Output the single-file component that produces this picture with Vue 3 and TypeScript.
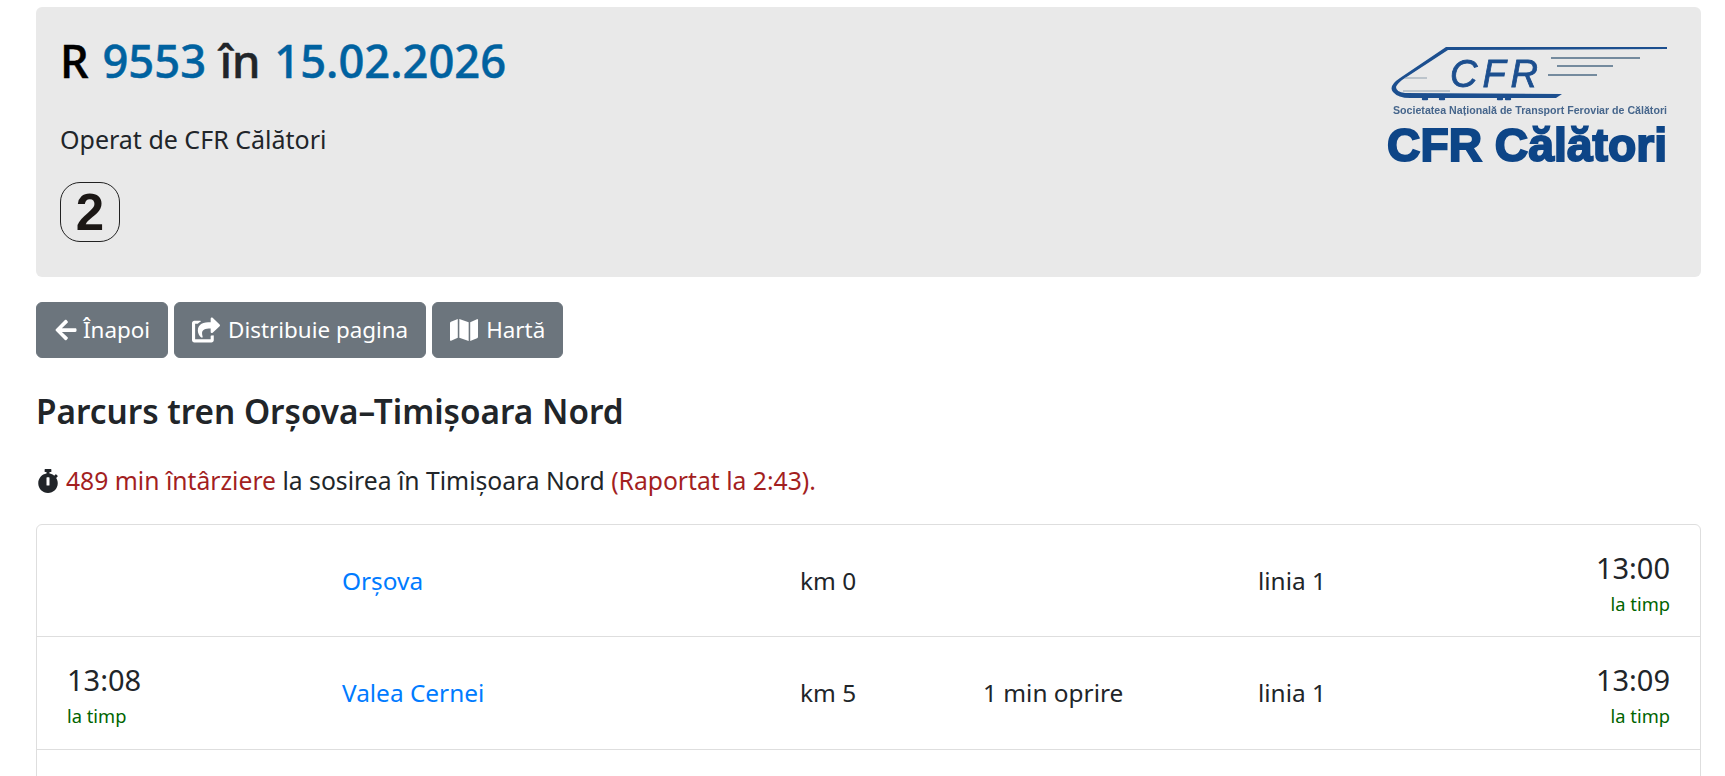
<template>
  <div class="page">
    <div class="jumbotron">
      <div class="train-info">
        <h1 class="title"><span class="dark">R</span> <span class="accent">9553</span> în <span class="accent">15.02.2026</span></h1>
        <p class="operator">Operat de CFR Călători</p>
        <span class="class-badge">2</span>
      </div>
      <svg class="logo" viewBox="22 12 290 126" width="290" height="126" aria-label="CFR Călători">
        <defs>
          <filter id="soft" x="-5%" y="-5%" width="110%" height="110%"><feGaussianBlur stdDeviation="0.45" /></filter>
        </defs>
        <g filter="url(#soft)">
          <path d="M307 17 L86 17 L40 48 Q28 56 33 62 Q38 68 50 68 L196 68 L202 64 L45 63 Q36 62 36 57 Q37 54 42 50 L88 20 L307 19 Z" fill="#1c4f8f" />
          <path d="M191 28 H280 M197 36 H253 M188 45 H237" fill="none" stroke="#4f6d85" stroke-width="1.6" />
          <path d="M45 48 H67 M43 61 H90" fill="none" stroke="#8fa0ad" stroke-width="1.2" />
          <path d="M63 69 h4 M80 69 h4 M138 69 h4 M146 69 h4" fill="none" stroke="#1c4f8f" stroke-width="2.4" stroke-linecap="round" />
          <text x="90" y="57" class="logo-cfr" textLength="88" lengthAdjust="spacing">CFR</text>
          <text x="33" y="84" class="logo-small" textLength="274" lengthAdjust="spacingAndGlyphs">Societatea Națională de Transport Feroviar de Călători</text>
          <text x="27" y="131" class="logo-big" textLength="280" lengthAdjust="spacingAndGlyphs">CFR Călători</text>
        </g>
      </svg>
    </div>

    <div class="actions">
      <button class="btn">
        <svg class="ico" viewBox="0 0 448 512"><path d="M257.5 445.1l-22.2 22.2c-9.4 9.4-24.6 9.4-33.9 0L7 273c-9.4-9.4-9.4-24.6 0-33.9L201.4 44.7c9.4-9.4 24.6-9.4 33.9 0l22.2 22.2c9.5 9.5 9.3 25-.4 34.3L136.6 216H424c13.3 0 24 10.7 24 24v32c0 13.3-10.7 24-24 24H136.6l120.5 114.8c9.8 9.3 10 24.8.4 34.3z" /></svg>
        Înapoi
      </button>
      <button class="btn">
        <svg class="ico wide" viewBox="0 0 576 512"><path d="M568.482 177.448L424.479 313.433C409.3 327.768 384 317.14 384 295.985v-71.963c-144.575.97-205.566 35.113-164.775 171.353 4.483 14.973-12.846 26.567-25.006 17.33C155.252 383.105 120 326.488 120 269.339c0-143.937 117.599-172.5 264-173.312V24.012c0-21.174 25.317-31.768 40.479-17.448l144.003 135.988c10.02 9.463 10.028 25.425 0 34.896zM384 379.128V448H64V128h50.916a11.99 11.99 0 0 0 8.648-3.693c14.953-15.568 32.237-27.89 51.014-37.676C186.708 80.83 182.584 64 168.92 64H48C21.49 64 0 85.49 0 112v352c0 26.51 21.49 48 48 48h352c26.51 0 48-21.49 48-48v-88.806c0-8.288-8.197-14.066-16.011-11.302a71.83 71.83 0 0 1-34.189 3.377c-7.27-1.046-13.8 4.514-13.8 11.859z" /></svg>
        Distribuie pagina
      </button>
      <button class="btn">
        <svg class="ico wide" viewBox="0 0 576 512"><path d="M0 117.66v346.32c0 11.32 11.43 19.06 21.94 14.86L160 416V32L20.12 87.95A32.006 32.006 0 0 0 0 117.66zM192 416l192 64V96L192 32v384zM554.06 33.16L416 96v384l139.88-55.95A31.996 31.996 0 0 0 576 394.34V48.02c0-11.32-11.43-19.06-21.94-14.86z" /></svg>
        Hartă
      </button>
    </div>

    <h2 class="route">Parcurs tren Orșova–Timișoara Nord</h2>

    <p class="delay">
      <svg class="ico" viewBox="0 0 448 512"><path d="M432 304c0 114.9-93.1 208-208 208S16 418.9 16 304c0-104 76.3-190.2 176-205.5V64h-28c-6.6 0-12-5.4-12-12V12c0-6.6 5.4-12 12-12h120c6.6 0 12 5.4 12 12v40c0 6.6-5.4 12-12 12h-28v34.5c37.5 5.8 71.7 21.6 99.7 44.6l27.5-27.5c4.7-4.7 12.3-4.7 17 0l28.3 28.3c4.7 4.7 4.7 12.3 0 17l-29.4 29.4-.6.6C419.7 223.3 432 262.2 432 304zm-176 36V188.5c0-6.6-5.4-12-12-12h-40c-6.6 0-12 5.4-12 12V340c0 6.6 5.4 12 12 12h40c6.6 0 12-5.4 12-12z" /></svg>
      <span class="late">489 min întârziere</span> la sosirea în Timișoara Nord <span class="late">(Raportat la 2:43).</span>
    </p>

    <ul class="stops">
      <li v-for="stop in stops" :key="stop.name" class="stop">
        <div class="time">
          <template v-if="stop.arrival">
            <div class="clock">{{ stop.arrival }}</div>
            <small class="status">la timp</small>
          </template>
        </div>
        <a class="station" href="#">{{ stop.name }}</a>
        <div>km {{ stop.km }}</div>
        <div>{{ stop.halt }}</div>
        <div>linia {{ stop.line }}</div>
        <div class="time departure">
          <div class="clock">{{ stop.departure }}</div>
          <small class="status">la timp</small>
        </div>
      </li>
    </ul>
  </div>
</template>

<script setup lang="ts">
interface Stop {
  name: string
  km: number
  line: number
  arrival?: string
  departure: string
  halt?: string
}

const stops: Stop[] = [
  { name: 'Orșova', km: 0, line: 1, departure: '13:00' },
  { name: 'Valea Cernei', km: 5, line: 1, arrival: '13:08', departure: '13:09', halt: '1 min oprire' },
]
</script>

<style>
html,
body {
  margin: 0;
  height: 776px;
  overflow: hidden;
  background: #fff;
}
</style>

<style scoped>
.page {
  padding: 7px 24px 0 36px;
  font-family: "Noto Sans", "Open Sans", sans-serif;
  font-size: 24.4px;
  line-height: 36px;
  color: #212529;
}

.jumbotron {
  display: flex;
  justify-content: space-between;
  height: 270px;
  box-sizing: border-box;
  padding: 27px 29px 0 24px;
  background: #e9e9e9;
  border-radius: 6px;
}

.title {
  margin: 0;
  font-size: 45.3px;
  line-height: 54px;
  font-weight: 500;
  word-spacing: 2px;
  color: #212529;
  -webkit-text-stroke: 0.5px currentColor;
}

.dark {
  color: #000;
}

.accent {
  color: #0062a0;
}

.operator {
  margin: 33px 0 25px;
  font-size: 25px;
}

.class-badge {
  display: flex;
  align-items: center;
  justify-content: center;
  width: 60px;
  height: 60px;
  box-sizing: border-box;
  padding-top: 2px;
  border: 1px solid #222;
  border-radius: 20px;
  font-family: "Liberation Sans", Arial, sans-serif;
  font-size: 51px;
  font-weight: 700;
  color: #1b1715;
}

.logo {
  margin-top: 8px;
  flex: none;
  overflow: visible;
}

.logo-cfr {
  font-family: "Liberation Sans", Arial, sans-serif;
  font-size: 38px;
  font-style: italic;
  fill: #1c4f8f;
  stroke: #1c4f8f;
  stroke-width: 0.8;
}

.logo-small {
  font-family: "Liberation Sans", Arial, sans-serif;
  font-size: 10.2px;
  font-weight: 700;
  fill: #46668c;
}

.logo-big {
  font-family: "Liberation Sans", Arial, sans-serif;
  font-size: 47px;
  font-weight: 700;
  fill: #0f4587;
  stroke: #0f4587;
  stroke-width: 2;
}

.actions {
  display: flex;
  gap: 6px;
  margin-top: 25px;
}

.btn {
  display: flex;
  align-items: center;
  gap: 5px;
  height: 56px;
  padding: 0 17px;
  border: 1px solid #6c757d;
  border-radius: 6px;
  background: #6c757d;
  color: #fff;
  font: inherit;
  font-size: 22.4px;
}

.ico {
  width: 24px;
  height: 24px;
  fill: currentColor;
  flex: none;
}

.ico.wide {
  width: 28px;
  height: 26px;
  margin-right: 3px;
}

.route {
  margin: 31px 0 0;
  font-size: 33.3px;
  line-height: 44px;
  font-weight: 600;
}

.delay {
  margin: 30px 0 0;
  font-size: 24.7px;
}

.delay .ico {
  margin-right: 6px;
  vertical-align: -3px;
}

.late {
  color: #a31f1f;
}

.stops {
  height: 260px;
  margin: 25px 0 0;
  padding: 0;
  list-style: none;
  border: 1px solid #dedede;
  border-radius: 6px 6px 0 0;
}

.stop {
  display: grid;
  grid-template-columns: 275px 458px 183px 275px 1fr 140px;
  align-items: center;
  height: 112.3px;
  box-sizing: border-box;
  padding: 1px 30px 0 30px;
  border-bottom: 1px solid #dedede;
}

.station {
  color: #007bff;
  text-decoration: none;
}

.time {
  padding-top: 1px;
}

.clock {
  font-size: 29px;
  line-height: 45px;
}

.status {
  display: block;
  font-size: 18.3px;
  line-height: 28px;
  color: #006400;
}

.departure {
  text-align: right;
}
</style>
